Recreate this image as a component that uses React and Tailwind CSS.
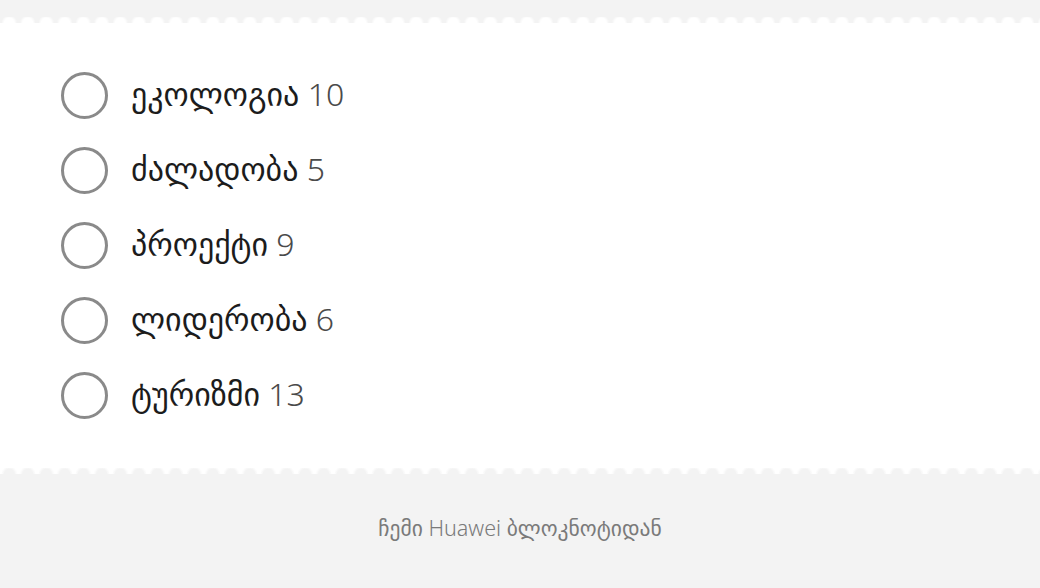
import React from 'react';

const topics = [
  { name: 'ეკოლოგია', count: 10 },
  { name: 'ძალადობა', count: 5 },
  { name: 'პროექტი', count: 9 },
  { name: 'ლიდერობა', count: 6 },
  { name: 'ტურიზმი', count: 13 },
];

const font = { fontFamily: '"Noto Sans", "DejaVu Sans", sans-serif' };

export default function App() {
  return (
    <div className="w-[1040px] h-[588px] bg-[#f3f3f3] flex flex-col overflow-hidden" style={font}>
      <div className="h-[17px] shrink-0" />
      {/* scalloped top edge */}
      <div className="h-[6px] shrink-0 bg-[radial-gradient(circle_at_50%_100%,#ffffff_5px,transparent_8px)] bg-[length:18.5px_6px] bg-repeat-x" />
      <div className="bg-white shrink-0 h-[445px] flex flex-col pl-[61px] pt-[49px] gap-[28px]">
        {topics.map((t) => (
          <label key={t.name} className="flex items-center gap-[23px] h-[47px]">
            <span className="w-[47px] h-[47px] rounded-full border-[3px] border-[#8a8a8a] shrink-0" />
            <span className="text-[32px] leading-none text-[#1c1c1c] font-normal mb-[4px]">
              {t.name} <span className="font-light text-[#4a4a4a]">{t.count}</span>
            </span>
          </label>
        ))}
      </div>
      {/* scalloped bottom edge */}
      <div className="h-[6px] shrink-0 bg-white">
        <div className="h-full bg-[radial-gradient(circle_at_50%_100%,#f3f3f3_5px,transparent_8px)] bg-[length:18.5px_6px] bg-repeat-x" />
      </div>
      <div className="flex-1 flex justify-center pt-[43px]">
        <p className="text-[21.5px] text-[#7a7a7a] leading-none">
          ჩემი <span className="font-light">Huawei</span> ბლოკნოტიდან
        </p>
      </div>
    </div>
  );
}
